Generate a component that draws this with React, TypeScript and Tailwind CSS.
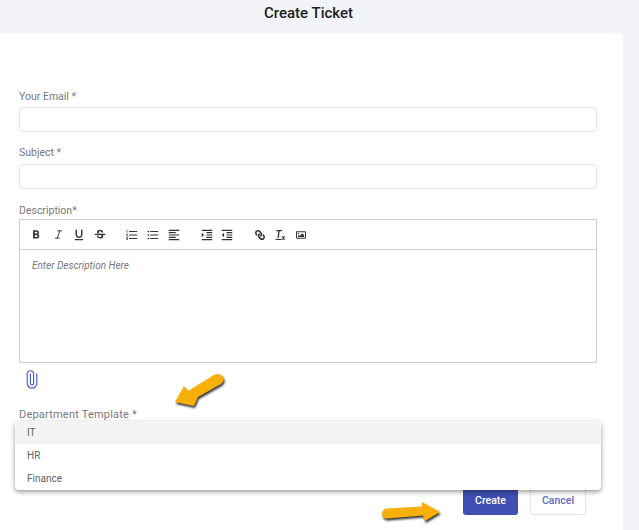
import type { ReactNode } from "react";
import { Italic, Paperclip } from "lucide-react";
import { FaLink, FaRegImage } from "react-icons/fa";
import {
  MdFormatAlignLeft,
  MdFormatBold,
  MdFormatIndentDecrease,
  MdFormatIndentIncrease,
  MdFormatListBulleted,
  MdFormatListNumbered,
  MdFormatUnderlined,
  MdStrikethroughS,
} from "react-icons/md";

function Field({ label, inputClass }: { label: string; inputClass: string }) {
  return (
    <div className="flex flex-col">
      <label className="text-[10.5px] leading-[14px] text-[#77777e]">{label}</label>
      <div className={`h-[25px] rounded-[4px] border border-[#e3e4e8] bg-white ${inputClass}`} />
    </div>
  );
}

function Slot({ className, children }: { className: string; children: ReactNode }) {
  return <span className={`flex h-[14px] w-[14px] shrink-0 items-center justify-center ${className}`}>{children}</span>;
}

function Toolbar() {
  return (
    <div className="flex h-[30px] items-center border-b border-[#cfcfcf] pl-[9px] text-[#333]">
      <Slot className="ml-0"><MdFormatBold size={16} /></Slot>
      <Slot className="ml-[8px]"><Italic size={11} strokeWidth={2} /></Slot>
      <Slot className="ml-[6.5px]"><MdFormatUnderlined size={14} /></Slot>
      <Slot className="ml-[7px]"><MdStrikethroughS size={14} /></Slot>
      <Slot className="ml-[18.5px]"><MdFormatListNumbered size={14} /></Slot>
      <Slot className="ml-[7px]"><MdFormatListBulleted size={14} /></Slot>
      <Slot className="ml-[6.5px]"><MdFormatAlignLeft size={14} /></Slot>
      <Slot className="ml-[19.5px]"><MdFormatIndentIncrease size={14} /></Slot>
      <Slot className="ml-[6px]"><MdFormatIndentDecrease size={14} /></Slot>
      <Slot className="ml-[19px]"><FaLink size={10} className="-scale-x-100" /></Slot>
      <Slot className="ml-[7px]">
        <span className="relative w-[11px] text-[10px] font-semibold italic leading-none underline">
          T<span className="absolute left-[6px] top-[5px] text-[7px] font-bold not-italic no-underline">x</span>
        </span>
      </Slot>
      <Slot className="ml-[5.5px]"><FaRegImage size={10} /></Slot>
    </div>
  );
}

function Arrow({ className, viewBox, d }: { className: string; viewBox: string; d: string }) {
  return (
    <svg viewBox={viewBox} className={`absolute drop-shadow-[1px_2px_1px_rgba(0,0,0,0.8)] ${className}`}>
      <path d={d} fill="#f6b008" />
    </svg>
  );
}

export default function App() {
  return (
    <div className="relative h-[530px] w-[639px] overflow-hidden bg-[#f3f4f9] font-['Roboto',sans-serif]">
      <h1 className="h-[33px] w-[617px] pt-[4px] text-center text-[15px] font-medium leading-[18px] text-[#1d1d22]">
        Create Ticket
      </h1>
      <main className="mr-[16px] h-[497px] rounded-tr-[6px] bg-white pl-[19px] pr-[26px] pt-[57px]">
        <div className="flex flex-col gap-[14px]">
          <Field label="Your Email *" inputClass="mt-[3px]" />
          <Field label="Subject *" inputClass="mt-[4px]" />
        </div>
        <div className="mt-[15px]">
          <label className="block text-[10.5px] leading-[14px] text-[#77777e]">Description*</label>
          <div className="mt-[1px] h-[144px] border border-[#cfcfcf]">
            <Toolbar />
            <p className="pl-[12px] pt-[9px] text-[10px] italic leading-[13px] text-[#77777c]">
              Enter Description Here
            </p>
          </div>
        </div>
        <Paperclip className="ml-[3px] mt-[7px] h-[19px] w-[19px] -rotate-45 text-[#4f5fc4]" strokeWidth={1.5} />
        <label className="mt-[19px] block text-[11px] leading-[14px] tracking-[0.2px] text-[#77777e]">
          Department Template *
        </label>
        <div className="mt-[63px] flex justify-end gap-[12px] pr-[11px]">
          <button className="h-[30px] w-[55px] rounded-[3px] bg-[#3f4fb2] pt-[1px] text-[10.5px] font-medium text-white">Create</button>
          <button className="h-[30px] w-[56px] rounded-[3px] border border-[#e6e6ec] bg-white pt-[1px] text-[10.5px] font-medium text-[#5b6ac4]">Cancel</button>
        </div>
      </main>
      <ul className="absolute left-[15px] top-[421px] w-[586px] rounded-[4px] bg-white text-[10px] leading-[13px] text-[#5f5f64] shadow-[0_2px_5px_rgba(0,0,0,0.4)]">
        <li className="flex h-[23px] items-center rounded-t-[4px] bg-[#f4f4f4] pl-[12px]">IT</li>
        <li className="flex h-[23px] items-center pl-[12px]">HR</li>
        <li className="flex h-[23px] items-center pl-[12px]">Finance</li>
      </ul>
      <Arrow
        className="left-[170px] top-[372px] h-[40px] w-[60px]"
        viewBox="0 0 60 40"
        d="M5 30L14 14L18 19L44 3Q50 0 53 5Q55 9 51 12L28 25L24 34Z"
      />
      <Arrow
        className="left-[378px] top-[498px] h-[28px] w-[66px]"
        viewBox="0 0 66 28"
        d="M4 15Q5 10.5 9 10.5L44 8.5L44 4L62 14L47 23L45 17.5L9 20.5Q4 20.5 4 15Z"
      />
    </div>
  );
}
